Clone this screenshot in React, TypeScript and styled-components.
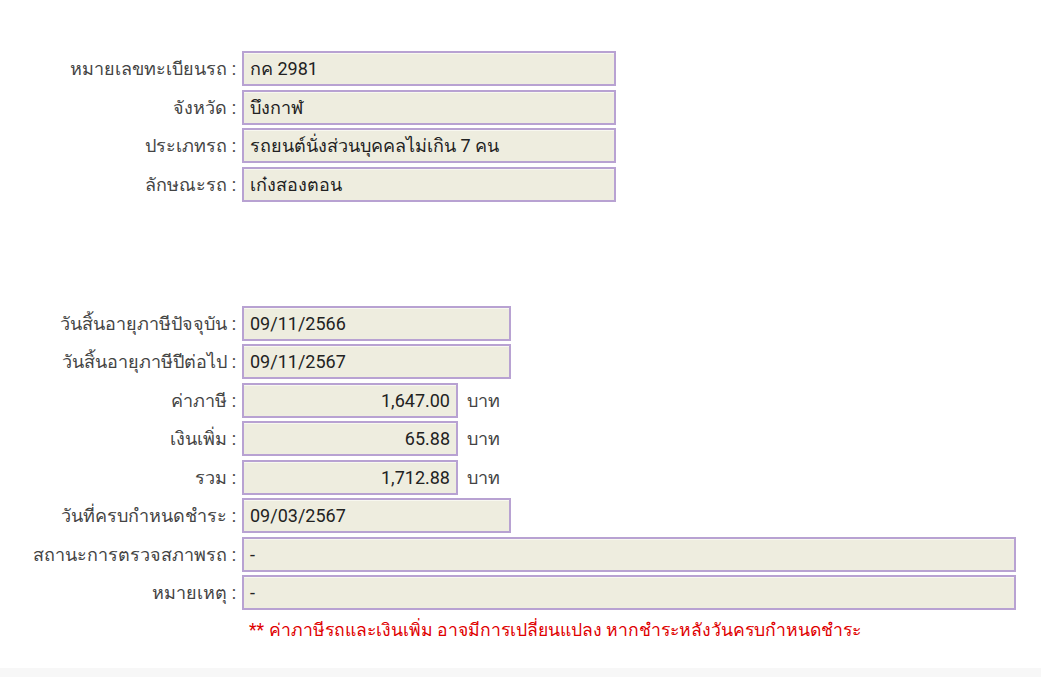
import * as React from 'react';
import styled, { createGlobalStyle } from 'styled-components';

const GlobalStyle = createGlobalStyle`
	html, body {
		margin: 0;
		padding: 0;
		background: #fff;
	}
	body {
		font-family: Roboto, 'Noto Sans', 'DejaVu Sans', sans-serif;
		color: #333;
	}
`

const Page = styled.div`
	width: 1041px;
	height: 677px;
	display: flex;
	flex-direction: column;
	box-sizing: border-box;
	padding-top: 51px;
	overflow: hidden;
`

const Section = styled.div`
	display: flex;
	flex-direction: column;
	gap: 3.5px;
	margin-bottom: ${(props: { after?: number }) => props.after || 0}px;
`

const Row = styled.div`
	display: grid;
	grid-template-columns: 236px auto;
	column-gap: 6px;
	align-items: center;
`

const Label = styled.div`
	text-align: right;
	font-size: 18px;
	color: #444;
	white-space: nowrap;
`

const Field = styled.div`
	display: flex;
	align-items: center;
	gap: 9px;
`

const Box = styled.div<{ w: number; right?: boolean }>`
	width: ${p => p.w}px;
	height: 35px;
	box-sizing: border-box;
	border: 2px solid #b8a2d2;
	background: #eeeddf;
	box-shadow: inset 0 1px 0 #f8f8f0;
	display: flex;
	align-items: center;
	justify-content: ${p => (p.right ? 'flex-end' : 'flex-start')};
	padding: 0 6px;
	font-size: 18px;
	color: #222;
	white-space: nowrap;
`

const Unit = styled.span`
	font-size: 18px;
	color: #444;
`

const Note = styled.div`
	margin-top: 6px;
	padding-left: 249px;
	font-size: 17.6px;
	color: #e00000;
`

const Footer = styled.div`
	margin-top: auto;
	height: 9px;
	background: #f7f7f7;
`

type Item = { label: string; value: string; w: number; right?: boolean; unit?: string }

const car: Item[] = [
	{ label: 'หมายเลขทะเบียนรถ :', value: 'กค 2981', w: 374 },
	{ label: 'จังหวัด :', value: 'บึงกาฬ', w: 374 },
	{ label: 'ประเภทรถ :', value: 'รถยนต์นั่งส่วนบุคคลไม่เกิน 7 คน', w: 374 },
	{ label: 'ลักษณะรถ :', value: 'เก๋งสองตอน', w: 374 },
]

const tax: Item[] = [
	{ label: 'วันสิ้นอายุภาษีปัจจุบัน :', value: '09/11/2566', w: 269 },
	{ label: 'วันสิ้นอายุภาษีปีต่อไป :', value: '09/11/2567', w: 269 },
	{ label: 'ค่าภาษี :', value: '1,647.00', w: 216, right: true, unit: 'บาท' },
	{ label: 'เงินเพิ่ม :', value: '65.88', w: 216, right: true, unit: 'บาท' },
	{ label: 'รวม :', value: '1,712.88', w: 216, right: true, unit: 'บาท' },
	{ label: 'วันที่ครบกำหนดชำระ :', value: '09/03/2567', w: 269 },
	{ label: 'สถานะการตรวจสภาพรถ :', value: '-', w: 774 },
	{ label: 'หมายเหตุ :', value: '-', w: 774 },
]

const FieldRow = (item: Item) => (
	<Row>
		<Label>{item.label}</Label>
		<Field>
			<Box w={item.w} right={item.right}>{item.value}</Box>
			{item.unit && <Unit>{item.unit}</Unit>}
		</Field>
	</Row>
)

const App = () => {
	return (
		<>
			<GlobalStyle />
			<Page>
				<Section after={104}>
					{car.map(i => <FieldRow key={i.label} {...i} />)}
				</Section>
				<Section>
					{tax.map(i => <FieldRow key={i.label} {...i} />)}
				</Section>
				<Note>** ค่าภาษีรถและเงินเพิ่ม อาจมีการเปลี่ยนแปลง หากชำระหลังวันครบกำหนดชำระ</Note>
				<Footer />
			</Page>
		</>
	)
}

export default App;
